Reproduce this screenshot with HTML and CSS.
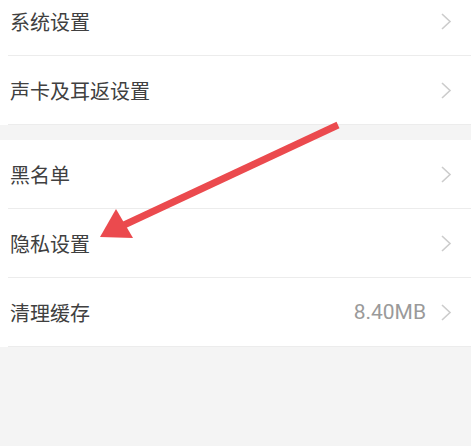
FILE: index.html
```html
<!DOCTYPE html>
<html lang="zh-CN">
<head>
<meta charset="utf-8">
<title>设置</title>
<link rel="stylesheet" href="styles.css">
</head>
<body>
<div class="page">
  <div class="group group-first">
    <div class="row"><span class="label">系统设置</span><span class="spacer"></span><svg class="chev" viewBox="0 0 12 19"><polyline points="2,2 10,9.5 2,17"/></svg></div>
    <div class="row"><span class="label">声卡及耳返设置</span><span class="spacer"></span><svg class="chev" viewBox="0 0 12 19"><polyline points="2,2 10,9.5 2,17"/></svg></div>
  </div>
  <div class="group">
    <div class="row"><span class="label">黑名单</span><span class="spacer"></span><svg class="chev" viewBox="0 0 12 19"><polyline points="2,2 10,9.5 2,17"/></svg></div>
    <div class="row"><span class="label">隐私设置</span><span class="spacer"></span><svg class="chev" viewBox="0 0 12 19"><polyline points="2,2 10,9.5 2,17"/></svg></div>
    <div class="row"><span class="label">清理缓存</span><span class="spacer"></span><span class="value">8.40MB</span><svg class="chev" viewBox="0 0 12 19"><polyline points="2,2 10,9.5 2,17"/></svg></div>
  </div>
  <svg class="arrow" viewBox="0 0 471 446">
    <line x1="338" y1="125" x2="124" y2="225"/>
    <polygon points="100,237 116,209 133,238"/>
  </svg>
</div>
</body>
</html>
```
FILE: styles.css
```css
html, body {
  margin: 0;
  padding: 0;
  background: #f4f4f4;
}
.page {
  position: relative;
  width: 471px;
  height: 446px;
  overflow: hidden;
  font-family: "Noto Sans CJK SC", "Noto Sans", sans-serif;
}
.group {
  background: #ffffff;
  margin-bottom: 15px;
}
.group-first {
  margin-top: -13px;
}
.row {
  display: flex;
  align-items: center;
  height: 68px;
  margin-left: 8px;
  padding-left: 2px;
  padding-right: 19px;
  border-bottom: 1px solid #ececec;
}
.label {
  font-size: 20px;
  color: #404040;
  line-height: 1;
  padding-top: 2px;
}
.spacer {
  flex: 1;
}
.value {
  font-family: Roboto, "Noto Sans", sans-serif;
  font-size: 21px;
  color: #9a9a9a;
  margin-right: 14px;
  line-height: 1;
}
.chev {
  width: 12px;
  height: 19px;
  display: block;
}
.chev polyline {
  fill: none;
  stroke: #cccccc;
  stroke-width: 1.6;
}
.arrow {
  position: absolute;
  left: 0;
  top: 0;
  width: 471px;
  height: 446px;
  pointer-events: none;
}
.arrow line {
  stroke: #eb4a4e;
  stroke-width: 7;
}
.arrow polygon {
  fill: #eb4a4e;
}
```
